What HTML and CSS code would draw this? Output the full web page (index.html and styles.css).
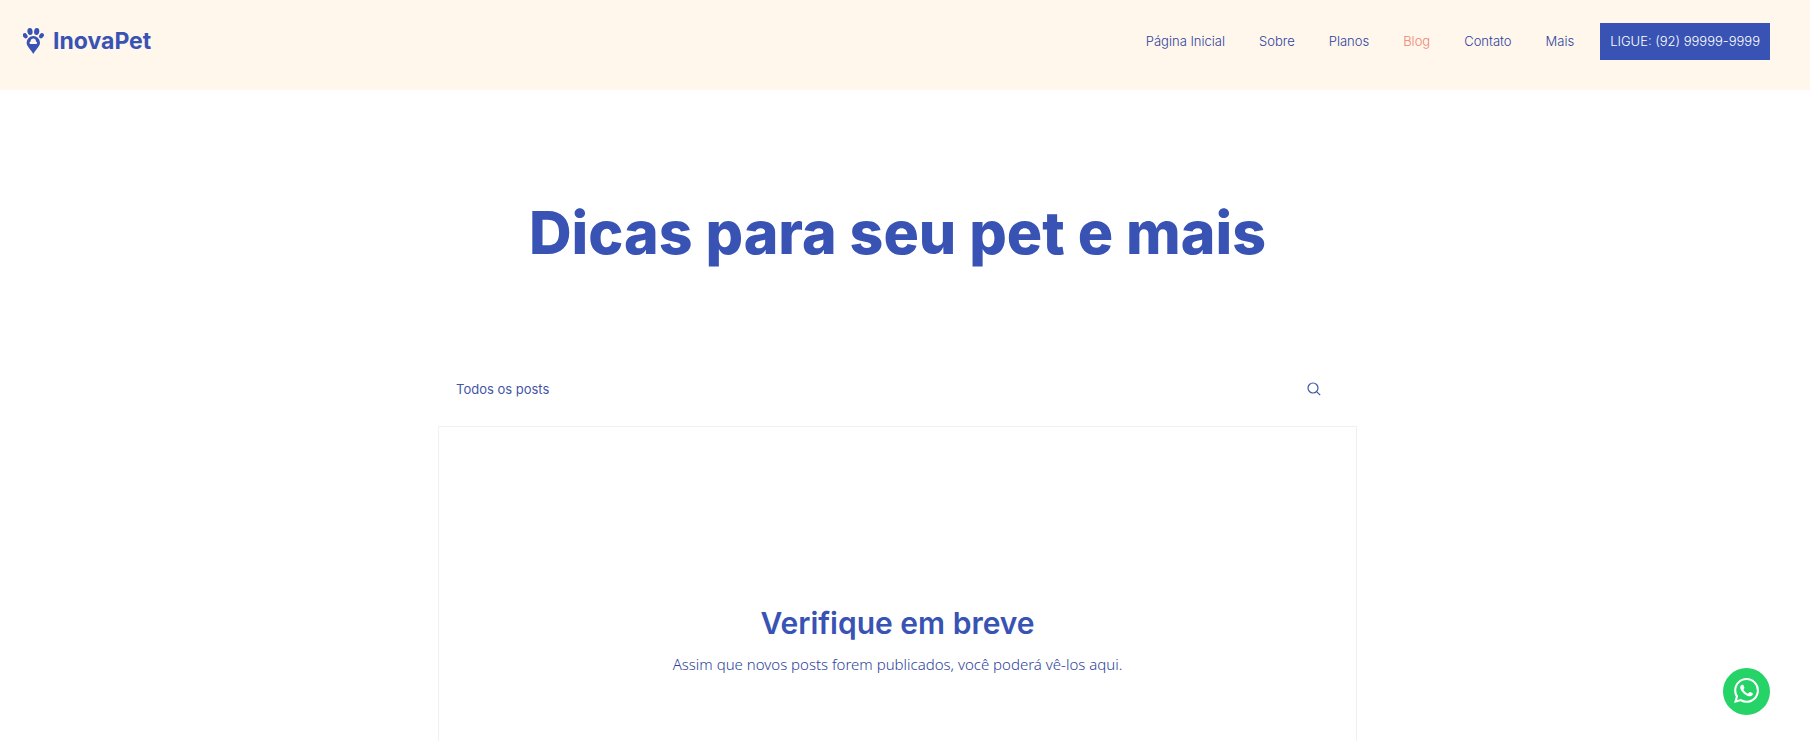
FILE: index.html
```html
<!DOCTYPE html>
<html lang="pt-BR">
<head>
<meta charset="utf-8">
<meta name="viewport" content="width=device-width, initial-scale=1">
<title>Blog | InovaPet</title>
<link rel="stylesheet" href="styles.css">
</head>
<body>
<header class="site-header">
  <a class="brand" href="#">
    <svg class="brand-icon" viewBox="0 0 22 26" aria-hidden="true">
      <g fill="currentColor">
        <ellipse cx="7" cy="3.500" rx="2.600" ry="3.500" transform="rotate(-8 7 3.5)"/>
        <ellipse cx="13.700" cy="3.500" rx="2.600" ry="3.500" transform="rotate(8 13.7 3.5)"/>
        <ellipse cx="2.200" cy="7.800" rx="2.100" ry="2.800" transform="rotate(-38 2.2 7.8)"/>
        <ellipse cx="18.500" cy="7.800" rx="2.100" ry="2.800" transform="rotate(38 18.5 7.8)"/>
        <path fill-rule="evenodd" d="M10.300 8a6.700 6.700 0 0 1 6.700 6.700c0 3.300-3.600 6-6.700 11.200-3.100-5.200-6.700-7.900-6.700-11.200A6.700 6.700 0 0 1 10.300 8zM7 16h6.600c.8-1 .5-2.200-.6-2.600 0-1.700-1.200-2.800-2.700-2.800s-2.700 1.100-2.700 2.800c-1.100.4-1.400 1.600-.6 2.600z"/>
      </g>
    </svg>
    <span>InovaPet</span>
  </a>
  <nav class="nav" aria-label="Principal">
    <a href="#">Página Inicial</a>
    <a href="#">Sobre</a>
    <a href="#">Planos</a>
    <a class="active" href="#" aria-current="page">Blog</a>
    <a href="#">Contato</a>
    <a href="#">Mais</a>
  </nav>
  <a class="call" href="tel:+5592999999999">LIGUE: (92) 99999-9999</a>
</header>
<main class="content">
  <h1 class="title">Dicas para seu pet e mais</h1>
  <section class="blog">
    <div class="toolbar">
      <a href="#">Todos os posts</a>
      <button class="search" type="button" aria-label="Buscar">
        <svg viewBox="0 0 14 14" fill="none" stroke="currentColor" stroke-width="1.2" aria-hidden="true">
          <circle cx="6" cy="6" r="5"/><path d="M9.600 9.600L13.200 13.200"/>
        </svg>
      </button>
    </div>
    <div class="card">
      <h2>Verifique em breve</h2>
      <p>Assim que novos posts forem publicados, você poderá vê-los aqui.</p>
    </div>
  </section>
</main>
<a class="whatsapp" href="#" aria-label="WhatsApp">
  <svg viewBox="0 0 24 24" fill="#fff" aria-hidden="true">
    <path d="M17.472 14.382c-.297-.149-1.758-.867-2.030-.967-.273-.099-.471-.148-.670.150-.197.297-.767.966-.940 1.164-.173.199-.347.223-.644.075-.297-.150-1.255-.463-2.390-1.475-.883-.788-1.480-1.761-1.653-2.059-.173-.297-.018-.458.130-.606.134-.133.298-.347.446-.520.149-.174.198-.298.298-.497.099-.198.050-.371-.025-.520-.075-.149-.669-1.612-.916-2.207-.242-.579-.487-.500-.669-.510-.173-.008-.371-.010-.570-.010-.198 0-.520.074-.792.372-.272.297-1.040 1.016-1.040 2.479 0 1.462 1.065 2.875 1.213 3.074.149.198 2.096 3.200 5.077 4.487.709.306 1.262.489 1.694.625.712.227 1.360.195 1.871.118.571-.085 1.758-.719 2.006-1.413.248-.694.248-1.289.173-1.413-.074-.124-.272-.198-.570-.347m-5.421 7.403h-.004a9.870 9.870 0 0 1-5.031-1.378l-.361-.214-3.741.982.998-3.648-.235-.374a9.860 9.860 0 0 1-1.510-5.260c.001-5.450 4.436-9.884 9.888-9.884 2.640 0 5.122 1.030 6.988 2.898a9.825 9.825 0 0 1 2.893 6.994c-.003 5.450-4.437 9.884-9.885 9.884m8.413-18.297A11.815 11.815 0 0 0 12.050 0C5.495 0 .160 5.335.157 11.892c0 2.096.547 4.142 1.588 5.945L.057 24l6.305-1.654a11.882 11.882 0 0 0 5.683 1.448h.005c6.554 0 11.890-5.335 11.893-11.893a11.821 11.821 0 0 0-3.480-8.413z"/>
  </svg>
</a>
</body>
</html>
```
FILE: styles.css
```css
* { box-sizing: border-box; }
body {
  margin: 0;
  background: #fff;
  color: #3853b4;
  font-family: Inter, "Liberation Sans", sans-serif;
  font-size: 13px;
  font-weight: 300;
}
a { color: inherit; text-decoration: none; }
.site-header {
  display: flex;
  align-items: flex-start;
  min-height: 90px;
  padding: 23px 40px 0 23px;
  background: #fff6ec;
}
.brand {
  display: flex;
  align-items: center;
  gap: 8px;
  margin-right: auto;
  font-size: 23px;
  line-height: 36px;
  font-weight: 700;
}
.brand-icon { width: 22px; height: 26px; }
.nav {
  display: flex;
  gap: 34px;
  margin-right: 26px;
  color: #2d429c;
  line-height: 37px;
}
.nav .active { color: #ee8573; }
.call {
  padding: 0 10px;
  background: #3853b4;
  color: #fff;
  line-height: 37px;
}
.content { padding: 107px 15px 0 0; }
.title {
  margin: 0;
  text-align: center;
  font-size: 59px;
  line-height: 72px;
  font-weight: 800;
}
.blog {
  width: 100%;
  max-width: 919px;
  margin: 83px auto 0;
}
.toolbar {
  display: flex;
  align-items: center;
  justify-content: space-between;
  height: 74px;
  padding: 0 36px 0 18px;
  color: #3f55a8;
  font-weight: 400;
}
.search {
  display: flex;
  padding: 0;
  border: 0;
  background: none;
  color: inherit;
}
.search svg { width: 14px; height: 14px; }
.card {
  min-height: 480px;
  padding: 176px 24px 0;
  border: 1px solid #f0f0f0;
  text-align: center;
}
.card h2 {
  margin: 0;
  font-size: 30px;
  line-height: 40px;
  font-weight: 600;
}
.card p {
  margin: 9px 0 0;
  color: #2d429c;
  font-family: "Noto Sans", sans-serif;
  font-size: 15px;
  line-height: 24px;
}
.whatsapp {
  position: fixed;
  right: 40px;
  bottom: 26px;
  display: flex;
  align-items: center;
  justify-content: center;
  width: 47px;
  height: 47px;
  padding-bottom: 2px;
  border-radius: 50%;
  background: #25d366;
}
.whatsapp svg { width: 25px; height: 25px; }
```
